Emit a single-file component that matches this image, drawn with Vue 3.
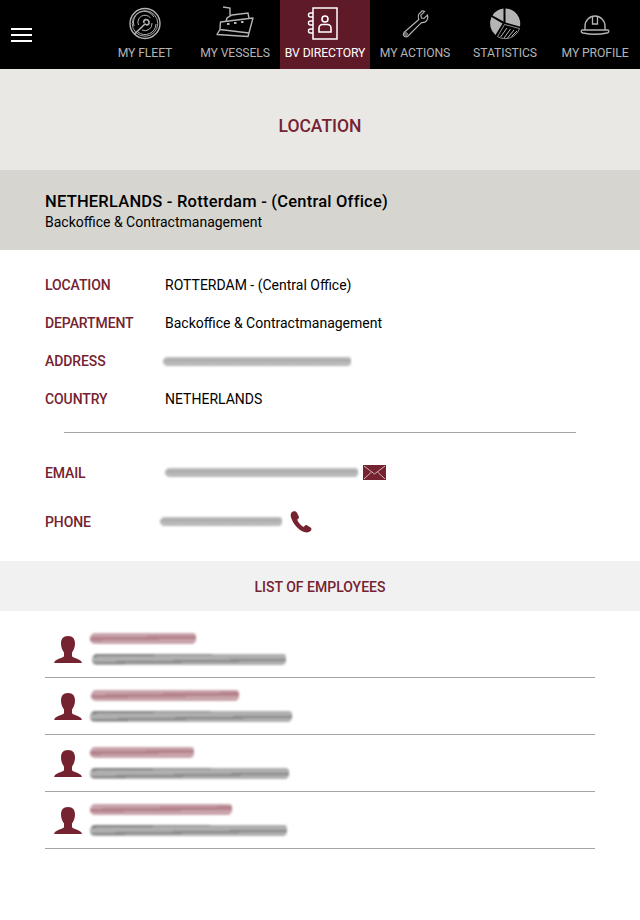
<script setup>
const nav = [
  { id: 'fleet', label: 'MY FLEET' },
  { id: 'vessels', label: 'MY VESSELS' },
  { id: 'dir', label: 'BV DIRECTORY', active: true },
  { id: 'actions', label: 'MY ACTIONS' },
  { id: 'stats', label: 'STATISTICS' },
  { id: 'profile', label: 'MY PROFILE' },
]
const plain = [
  { k: 'LOCATION', v: 'ROTTERDAM - (Central Office)' },
  { k: 'DEPARTMENT', v: 'Backoffice & Contractmanagement' },
  { k: 'ADDRESS', blur: 188, ml: -2 },
  { k: 'COUNTRY', v: 'NETHERLANDS' },
]
const employees = [
  { a: 106, am: 0, b: 194, bm: 2 },
  { a: 148, am: 1, b: 202, bm: 0 },
  { a: 104, am: 0, b: 199, bm: 0 },
  { a: 142, am: 0, b: 197, bm: 0 },
]
</script>

<template>
  <div class="page">
    <header class="topbar">
      <button class="burger" aria-label="Menu"><i></i><i></i><i></i></button>
      <nav class="nav">
        <a v-for="n in nav" :key="n.id" class="nav-item" :class="{ active: n.active }">
          <svg class="nav-icon" viewBox="0 0 40 36" fill="none" stroke="currentColor" stroke-width="1.2">
            <template v-if="n.id === 'fleet'">
              <circle cx="20" cy="17.500" r="15" stroke-width="1.400" />
              <circle cx="20" cy="17.500" r="12.800" stroke-width=".9" />
              <path d="M9 20 A11 11 0 0 1 29 11 M31 18 A11 11 0 0 1 13 26" stroke-width="1" />
              <path d="M13.500 19 A7 7 0 0 1 25.500 12 M27 17 A7 7 0 0 1 17 24" stroke-width="1" />
              <path d="M9.500 28 L20 18 Q22.500 20 24 17.500 Q24.500 13.500 20.500 13.500 Q18 14.500 19 17" stroke-width="1.600" />
            </template>
            <template v-else-if="n.id === 'vessels'">
              <path d="M5 23 L5.500 16 L38 12 L33 30.500 L2 28.500 L5 23.500 L34 27" stroke-width="1.400" stroke-linejoin="round" />
              <path d="M11 15.500 L12 12 L17 9 L33 7 L34 12 M15 9.500 L15 2 L8 1" stroke-width="1.400" />
              <path d="M12 18h2.500M19 17h2.500M26 16h2.500" stroke-width="2" />
            </template>
            <template v-else-if="n.id === 'dir'">
              <rect x="8" y="2" width="24" height="31" stroke-width="1.500" />
              <path d="M8 7H5.500a1.800 1.800 0 0 0 0 4H8M8 15H5.500a1.800 1.800 0 0 0 0 4H8M8 23H5.500a1.800 1.800 0 0 0 0 4H8" stroke-width="1.400" />
              <circle cx="20" cy="13" r="3" stroke-width="1.600" />
              <path d="M14 26v-4a3.500 3.500 0 0 1 3.500-3.500h5a3.500 3.500 0 0 1 3.500 3.500v4z" stroke-width="1.600" />
            </template>
            <template v-else-if="n.id === 'actions'">
              <path d="M27 5 L23.500 8.500 Q22.800 11.500 23.800 13.500 L9 26.500 Q7.500 28.500 9.500 30.500 Q11.500 31.500 13 30 L26.500 16.500 Q29.500 17 31.500 15 Q33.500 12.500 32.500 9 L29 12.500 L26.500 12 L25.800 9.500 L29.500 5.500 Q28 4.500 27 5 Z" stroke-width="1.100" />
              <circle cx="11" cy="28" r="1.300" stroke-width="1" />
            </template>
            <template v-else-if="n.id === 'stats'">
              <path d="M20.500 16.500 L20.500 2.500 A15 15 0 0 1 34.900 20.500 Z" fill="currentColor" stroke="none" />
              <path d="M18.500 15.500 L18.500 2.600 A15 15 0 0 0 7.500 9.500 Z" fill="currentColor" stroke="none" />
              <path d="M6.500 11 L17.500 17.500 L10.500 29 A15 15 0 0 1 6.500 11 Z" fill="currentColor" stroke="none" />
              <path d="M19.500 18.500 L34.500 22.500 A15 15 0 0 1 12.500 30.500 Z" stroke-width=".8" />
              <path d="M15.500 31 L22 22M19 32 L25.500 23M22.500 32 L29 24M26.500 30.500 L32 25" stroke-width="1" />
            </template>
            <template v-else>
              <path d="M10 24 V20 A10 10 0 0 1 30 20 V24" stroke-width="1.400" />
              <path d="M17.500 10.500 V18 H22.500 V10.500" stroke-width="1.300" />
              <path d="M7 24 H33 Q35 26 32 27 Q20 29.500 8 27 Q5 26 7 24 Z" stroke-width="1.400" />
            </template>
          </svg>
          <span class="nav-label">{{ n.label }}</span>
        </a>
      </nav>
    </header>

    <section class="title-band"><h1>LOCATION</h1></section>

    <section class="sub-band">
      <h2>NETHERLANDS - Rotterdam - (Central Office)</h2>
      <p>Backoffice &amp; Contractmanagement</p>
    </section>

    <section class="details">
      <div v-for="r in plain" :key="r.k" class="row">
        <span class="key">{{ r.k }}</span>
        <span v-if="r.v" class="val">{{ r.v }}</span>
        <span v-else class="smear grey" :style="{ width: r.blur + 'px', marginLeft: r.ml + 'px' }"></span>
      </div>
    </section>

    <hr class="rule" />

    <section class="contact">
      <div class="row email">
        <span class="key">EMAIL</span>
        <span class="smear grey" :style="{ width: '193px' }"></span>
        <svg class="mail" viewBox="0 0 23 15">
          <rect width="23" height="15" fill="#752231" />
          <path d="M1 1 L11.500 9 L22 1 M1 14 L8.500 7M22 14 L14.500 7" fill="none" stroke="#e6d5d8" stroke-width=".8" />
        </svg>
      </div>
      <div class="row phone">
        <span class="key">PHONE</span>
        <span class="smear grey" :style="{ width: '122px', marginLeft: '-5px' }"></span>
        <svg class="tel" viewBox="0 0 22 22">
          <path d="M2.500 .8 C.5 1.800 .3 4.500 1.200 7 C3 12.500 8 18.800 14 21 C16.500 21.800 19.500 21.500 21 19.500 C21.800 18.300 21.500 17.300 20.500 16.600 L17.300 14.500 C16.300 13.900 15.300 14 14.600 14.900 L13.500 16 C10.500 14.500 8.300 11.500 7.200 8.800 L8.300 7.800 C9 7 9.200 6.200 8.600 5 L6.800 1.500 C6 .2 4 0 2.500 .8 Z" fill="#752231" />
        </svg>
      </div>
    </section>

    <section class="list-head">LIST OF EMPLOYEES</section>

    <ul class="employees">
      <li v-for="(e, i) in employees" :key="i" class="emp">
        <svg class="avatar" viewBox="0 0 28 27">
          <path d="M14 0 C19 0 21 3 21 7.500 C21 11.500 19.500 14.500 18 16.500 L18 20 C18.500 22 24.500 22.500 27 25 L28 27 H0 L1 25 C3.500 22.500 9.500 22 10 20 L10 16.500 C8.500 14.500 7 11.500 7 7.500 C7 3 9 0 14 0 Z" fill="#752231" />
        </svg>
        <div class="emp-lines">
          <span class="smear rose" :style="{ width: e.a + 'px', marginLeft: e.am + 'px' }"></span>
          <span class="smear dark" :style="{ width: e.b + 'px', marginLeft: e.bm + 'px' }"></span>
        </div>
      </li>
    </ul>
  </div>
</template>

<style>
html, body { margin: 0; background: #fff; }
</style>

<style scoped>
.page {
  width: 640px;
  height: 920px;
  overflow: hidden;
  background: #fff;
  font-family: Roboto, "Liberation Sans", sans-serif;
  color: #000;
}
.topbar {
  height: 69px;
  background: #000;
  display: flex;
  justify-content: space-between;
}
.burger {
  width: 100px;
  padding: 28px 0 0 11px;
  border: 0;
  background: none;
  display: flex;
  flex-direction: column;
  gap: 4px;
}
.burger i {
  display: block;
  width: 21px;
  height: 2px;
  background: #fff;
}
.nav { display: flex; }
.nav-item {
  width: 90px;
  height: 69px;
  box-sizing: border-box;
  display: flex;
  flex-direction: column;
  align-items: center;
  padding-top: 6px;
  color: #b4b4b4;
}
.nav-item.active { background: #5f1a28; color: #fff; }
.nav-icon { width: 40px; height: 36px; display: block; }
.nav-label {
  font-size: 12.200px;
  line-height: 15px;
  margin-top: 4px;
  white-space: nowrap;
  letter-spacing: -.1px;
}
.title-band {
  height: 101px;
  box-sizing: border-box;
  padding-top: 13px;
  background: #eae8e5;
  display: flex;
  align-items: center;
  justify-content: center;
}
.title-band h1 {
  margin: 0;
  font-size: 17.500px;
  font-weight: 500;
  color: #752231;
}
.sub-band {
  height: 80px;
  box-sizing: border-box;
  background: #d6d5d0;
  padding: 22px 45px 0;
}
.sub-band h2 {
  margin: 0;
  font-size: 16.500px;
  line-height: 20px;
  font-weight: 500;
  letter-spacing: .22px;
}
.sub-band p {
  margin: 0;
  font-size: 14px;
  line-height: 20px;
}
.details { padding: 16px 45px 0; }
.row {
  display: flex;
  align-items: center;
  height: 38px;
}
.key {
  width: 120px;
  flex: none;
  font-size: 14px;
  font-weight: 500;
  letter-spacing: -.1px;
  color: #752231;
}
.val { font-size: 14px; }
.smear {
  display: block;
  filter: blur(1.100px);
  border-radius: 5px 3px 4px 5px / 60% 40% 50% 50%;
}
.grey {
  background:
    linear-gradient(180deg, transparent 0 30%, rgba(90, 90, 90, .3) 30% 45%, transparent 45% 100%),
    repeating-linear-gradient(90deg, #a8a8a8 0 1px, #c2c2c2 1px 3px);
  height: 9px;
}
.dark {
  background:
    linear-gradient(179deg, rgba(60, 60, 60, .4) 0 18%, transparent 18% 55%, rgba(70, 70, 70, .35) 55% 70%, transparent 70%),
    repeating-linear-gradient(90deg, #9c9c9c 0 1px, #b8b8b8 1px 3px);
  height: 11px;
}
.rose {
  background:
    linear-gradient(179deg, transparent 0 35%, rgba(130, 50, 65, .3) 35% 60%, transparent 60%),
    repeating-linear-gradient(90deg, #bb8f98 0 1px, #d0aeb5 1px 3px);
  height: 11px;
}
.rule {
  margin: 14px 64px 0;
  border: 0;
  border-top: 1px solid #a5a5a5;
}
.contact { padding: 15px 45px 0; }
.contact .row { height: 49px; }
.mail { width: 23px; height: 15px; margin-left: 5px; flex: none; }
.tel { width: 22px; height: 22px; margin-left: 8px; flex: none; }
.list-head {
  margin-top: 15px;
  height: 50px;
  box-sizing: border-box;
  padding-top: 2px;
  background: #f1f1f1;
  display: flex;
  align-items: center;
  justify-content: center;
  font-size: 14px;
  font-weight: 500;
  color: #752231;
}
.employees {
  list-style: none;
  margin: 10px 45px 0;
  padding: 0;
}
.emp {
  height: 57px;
  box-sizing: border-box;
  border-bottom: 1px solid #a5a5a5;
  display: flex;
  align-items: flex-start;
}
.avatar { width: 28px; height: 27px; margin: 15px 0 0 9px; flex: none; }
.emp-lines {
  margin: 12px 0 0 8px;
  display: flex;
  flex-direction: column;
  gap: 10px;
}
</style>
